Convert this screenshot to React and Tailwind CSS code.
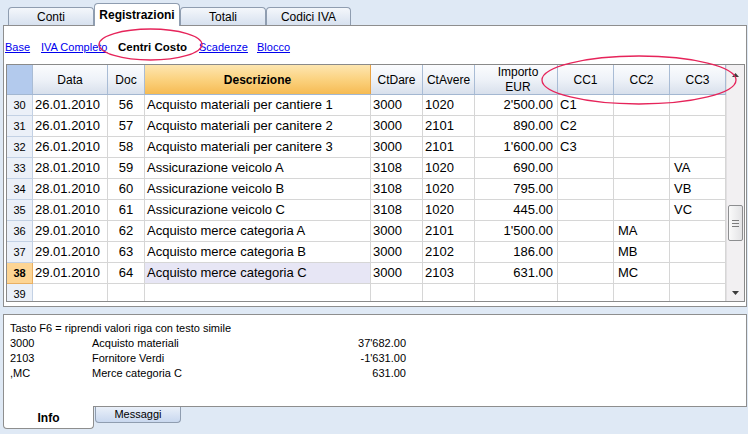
import React from "react";

const rows = [
  { n: 30, d: "26.01.2010", doc: "56", desc: "Acquisto materiali per cantiere 1", cd: "3000", ca: "1020", imp: "2'500.00", c1: "C1", c2: "", c3: "" },
  { n: 31, d: "26.01.2010", doc: "57", desc: "Acquisto materiali per canitere 2", cd: "3000", ca: "2101", imp: "890.00", c1: "C2", c2: "", c3: "" },
  { n: 32, d: "26.01.2010", doc: "58", desc: "Acquisto materiali per canitere 3", cd: "3000", ca: "2101", imp: "1'600.00", c1: "C3", c2: "", c3: "" },
  { n: 33, d: "28.01.2010", doc: "59", desc: "Assicurazione veicolo A", cd: "3108", ca: "1020", imp: "690.00", c1: "", c2: "", c3: "VA" },
  { n: 34, d: "28.01.2010", doc: "60", desc: "Assicurazione veicolo B", cd: "3108", ca: "1020", imp: "795.00", c1: "", c2: "", c3: "VB" },
  { n: 35, d: "28.01.2010", doc: "61", desc: "Assicurazione veicolo C", cd: "3108", ca: "1020", imp: "445.00", c1: "", c2: "", c3: "VC" },
  { n: 36, d: "29.01.2010", doc: "62", desc: "Acquisto merce categoria A", cd: "3000", ca: "2101", imp: "1'500.00", c1: "", c2: "MA", c3: "" },
  { n: 37, d: "29.01.2010", doc: "63", desc: "Acquisto merce categoria B", cd: "3000", ca: "2102", imp: "186.00", c1: "", c2: "MB", c3: "" },
  { n: 38, d: "29.01.2010", doc: "64", desc: "Acquisto merce categoria C", cd: "3000", ca: "2103", imp: "631.00", c1: "", c2: "MC", c3: "", sel: true },
  { n: 39, d: "", doc: "", desc: "", cd: "", ca: "", imp: "", c1: "", c2: "", c3: "" },
];

const hdrCell =
  "flex items-center justify-center border-r border-[#a9bcd5] bg-linear-to-b from-[#fbfcfe] via-[#eef2f8] to-[#d8e0ec] text-[12px] text-black";
const cell = "flex items-center border-r border-b border-[#d6d6d6] whitespace-nowrap overflow-hidden";

function TopTab({ label, active, w }) {
  if (active) {
    return (
      <div
        className={`${w} h-[23px] -mb-px z-10 flex items-center justify-center rounded-t-[4px] border border-b-0 border-[#8f9db0] bg-white text-[12px] font-bold text-black`}
      >
        {label}
      </div>
    );
  }
  return (
    <div
      className={`${w} h-[18px] flex items-center justify-center rounded-t-[4px] border border-b-0 border-[#8f9db0] bg-linear-to-b from-[#f4f7fb] to-[#d7e1ef] text-[12px] text-black`}
    >
      {label}
    </div>
  );
}

function Scrollbar() {
  return (
    <div className="w-[18px] flex flex-col bg-[#f2f0f2] border-l border-[#e2e0e2]">
      <div className="h-[17px] flex items-center justify-center pt-[2px]">
        <svg width="7" height="4" viewBox="0 0 7 4">
          <path d="M0 4 L3.5 0 L7 4 Z" fill="#3c3c3c" />
        </svg>
      </div>
      <div className="flex-1 flex flex-col">
        <div className="mt-[123px] mx-[1px] h-[36px] rounded-[2px] border border-[#8d8e90] bg-linear-to-r from-[#fafafa] to-[#e3e3e5] flex flex-col items-center justify-center gap-[2px]">
          <div className="w-[7px] h-px bg-[#7c7c7c]" />
          <div className="w-[7px] h-px bg-[#7c7c7c]" />
          <div className="w-[7px] h-px bg-[#7c7c7c]" />
        </div>
      </div>
      <div className="h-[17px] flex items-center justify-center">
        <svg width="7" height="4" viewBox="0 0 7 4">
          <path d="M0 0 L3.5 4 L7 0 Z" fill="#3c3c3c" />
        </svg>
      </div>
    </div>
  );
}

export default function App() {
  return (
    <div
      className="relative w-[748px] h-[434px] overflow-hidden bg-[#dfe9f5] flex flex-col"
      style={{ fontFamily: '"Liberation Sans", Arial, sans-serif' }}
    >
      {/* top tabs */}
      <div className="h-[25px] flex items-end pl-[8px]">
        <TopTab label="Conti" w="w-[86px]" />
        <TopTab label="Registrazioni" w="w-[86px]" active />
        <TopTab label="Totali" w="w-[86px]" />
        <TopTab label="Codici IVA" w="w-[85px]" />
      </div>

      {/* main panel */}
      <div className="ml-[3px] w-[744px] h-[282px] border border-[#8e8e8e] bg-white flex flex-col">
        <div className="h-[38px] flex items-center pt-[5px] pl-[1px] text-[11px]">
          <span className="w-[36px] shrink-0"><span className="text-[#0000ee] underline">Base</span></span>
          <span className="w-[77px] shrink-0"><span className="text-[#0000ee] underline">IVA Completo</span></span>
          <span className="w-[81px] shrink-0 font-bold text-black text-[11.5px]">Centri Costo</span>
          <span className="w-[58px] shrink-0"><span className="text-[#0000ee] underline">Scadenze</span></span>
          <span><span className="text-[#0000ee] underline">Blocco</span></span>
        </div>

        <div className="ml-[2px] w-[739px] h-[238px] border border-[#8a8a8a] flex overflow-hidden">
          <div className="flex-1 flex flex-col overflow-hidden">
            {/* header */}
            <div className="h-[30px] flex border-b border-[#a3b7d1] shrink-0">
              <div className="w-[26px] border-r border-[#a9bcd5] bg-[#b3caed]" />
              <div className={`${hdrCell} w-[75px]`}>Data</div>
              <div className={`${hdrCell} w-[37px]`}>Doc</div>
              <div className="w-[226px] flex items-center justify-center border-r border-[#e9a345] bg-linear-to-b from-[#fde6b0] via-[#fbd27f] to-[#f6bb52] text-[12px] font-bold text-black">
                Descrizione
              </div>
              <div className={`${hdrCell} w-[52px]`}>CtDare</div>
              <div className={`${hdrCell} w-[52px]`}>CtAvere</div>
              <div className={`${hdrCell} w-[83px] flex-col leading-[15px] pl-[4px]`}>
                <span>Importo</span>
                <span>EUR</span>
              </div>
              <div className={`${hdrCell} w-[56px]`}>CC1</div>
              <div className={`${hdrCell} w-[56px]`}>CC2</div>
              <div className={`${hdrCell} w-[56px]`}>CC3</div>
            </div>

            {/* body */}
            {rows.map((r) => (
              <div key={r.n} className="h-[21px] flex shrink-0 text-[13px] text-black">
                <div
                  className={`w-[26px] flex items-center justify-center border-r border-b text-[11px] ${
                    r.sel
                      ? "bg-[#fdd594] border-[#e9b063] font-bold"
                      : "bg-[#ebf0f8] border-[#c3d1e4]"
                  }`}
                >
                  {r.n}
                </div>
                <div className={`${cell} w-[75px] pl-[2px]`}>{r.d}</div>
                <div className={`${cell} w-[37px] justify-center`}>{r.doc}</div>
                <div className={`${cell} w-[226px] pl-[2px] ${r.sel ? "bg-[#e7e6f5]" : ""}`}>{r.desc}</div>
                <div className={`${cell} w-[52px] pl-[2px]`}>{r.cd}</div>
                <div className={`${cell} w-[52px] pl-[2px]`}>{r.ca}</div>
                <div className={`${cell} w-[83px] justify-end pr-[4px]`}>{r.imp}</div>
                <div className={`${cell} w-[56px] pl-[2px]`}>{r.c1}</div>
                <div className={`${cell} w-[56px] pl-[4px]`}>{r.c2}</div>
                <div className={`${cell} w-[56px] pl-[4px]`}>{r.c3}</div>
              </div>
            ))}
          </div>
          <Scrollbar />
        </div>
      </div>

      {/* info panel */}
      <div className="mt-[7px] ml-[3px] w-[744px] h-[93px] border border-[#8e8e8e] bg-white pt-[6px] pl-[6px] text-[11px] leading-[15px] text-black">
        <div>Tasto F6 = riprendi valori riga con testo simile</div>
        <div className="flex">
          <span className="w-[82px]">3000</span>
          <span className="w-[234px]">Acquisto materiali</span>
          <span className="w-[80px] text-right">37'682.00</span>
        </div>
        <div className="flex">
          <span className="w-[82px]">2103</span>
          <span className="w-[234px]">Fornitore Verdi</span>
          <span className="w-[80px] text-right">-1'631.00</span>
        </div>
        <div className="flex">
          <span className="w-[82px]">,MC</span>
          <span className="w-[234px]">Merce categoria C</span>
          <span className="w-[80px] text-right">631.00</span>
        </div>
      </div>

      {/* bottom tabs */}
      <div className="flex items-start ml-[3px] -mt-px">
        <div className="w-[91px] h-[23px] border border-t-0 border-[#8e8e8e] rounded-b-[4px] bg-white flex items-center justify-center pt-[2px] text-[12px] font-bold text-black">
          Info
        </div>
        <div className="ml-[1px] mt-px w-[86px] h-[16px] border border-t-0 border-[#8f9db0] rounded-b-[4px] bg-linear-to-b from-[#eaf0f9] to-[#c9d8ef] flex items-center justify-center text-[11px] text-black">
          Messaggi
        </div>
      </div>

      {/* red annotation ellipses */}
      <svg className="absolute left-0 top-0 pointer-events-none" width="748" height="434" viewBox="0 0 748 434">
        <ellipse cx="150.5" cy="44.5" rx="51.5" ry="15.5" fill="none" stroke="#e6245a" strokeWidth="1.3" />
        <ellipse cx="639" cy="80" rx="97" ry="24" fill="none" stroke="#e6245a" strokeWidth="1.3" />
      </svg>
    </div>
  );
}
